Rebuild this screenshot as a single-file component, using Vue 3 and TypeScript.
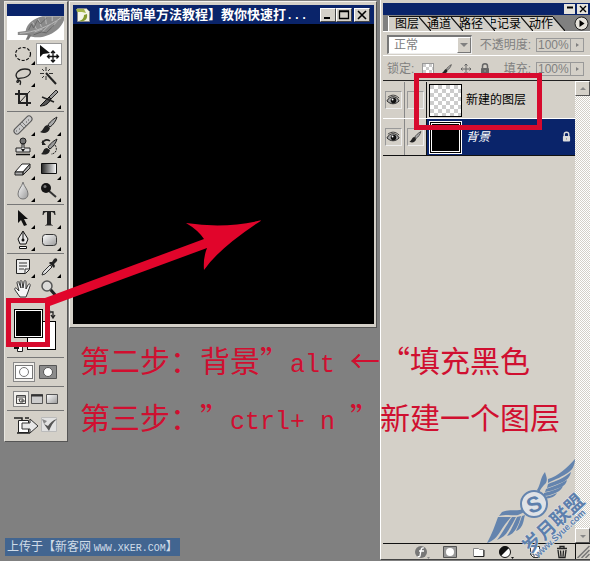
<script setup lang="ts">
import { ref } from 'vue'

interface Tool {
  icon: string
  label: string
  more?: boolean
}

const toolGroups: Tool[][] = [
  [
    { icon: 'marquee', label: '选框', more: true },
    { icon: 'move', label: '移动' },
    { icon: 'lasso', label: '套索', more: true },
    { icon: 'wand', label: '魔棒' },
    { icon: 'crop', label: '裁剪' },
    { icon: 'slice', label: '切片', more: true },
  ],
  [
    { icon: 'heal', label: '修复画笔', more: true },
    { icon: 'brush', label: '画笔', more: true },
    { icon: 'stamp', label: '图章', more: true },
    { icon: 'history', label: '历史画笔', more: true },
    { icon: 'eraser', label: '橡皮擦', more: true },
    { icon: 'gradient', label: '渐变', more: true },
    { icon: 'blur', label: '模糊', more: true },
    { icon: 'dodge', label: '减淡', more: true },
  ],
  [
    { icon: 'select', label: '路径选择', more: true },
    { icon: 'type', label: '文字', more: true },
    { icon: 'pen', label: '钢笔', more: true },
    { icon: 'shape', label: '形状', more: true },
  ],
  [
    { icon: 'notes', label: '注释', more: true },
    { icon: 'dropper', label: '吸管', more: true },
    { icon: 'hand', label: '抓手' },
    { icon: 'zoom', label: '缩放' },
  ],
]

const activeTool = ref('move')
const tabs = ['图层', '通道', '路径', '史记录', '动作']
const activeTab = ref('图层')
const opacity = ref('100%')
const fill = ref('100%')
const activeLayer = ref('背景')
const layers = [
  { name: '新建的图层', kind: 'empty', locked: false },
  { name: '背景', kind: 'black', locked: true },
]
const footer = [
  { icon: 'fx', label: '图层样式' },
  { icon: 'mask', label: '图层蒙版' },
  { icon: 'folder', label: '新建组' },
  { icon: 'adjust', label: '调整图层' },
  { icon: 'page', label: '新建图层' },
  { icon: 'trash', label: '删除图层' },
]
</script>

<template>
  <main class="desktop" lang="zh-CN">
    <svg class="sprite" aria-hidden="true">
      <defs>
        <linearGradient id="g-bw"><stop offset="0" stop-color="#222" /><stop offset="1" stop-color="#fff" /></linearGradient>
        <linearGradient id="g-soft" x1="0" y1="0" x2="1" y2="1"><stop offset="0" stop-color="#fff" /><stop offset="1" stop-color="#999" /></linearGradient>
        <symbol id="marquee" viewBox="0 0 22 22"><ellipse cx="11" cy="11" rx="7.5" ry="6.5" fill="none" stroke="#111" stroke-width="1.2" stroke-dasharray="3 1.6" /></symbol>
        <symbol id="move" viewBox="0 0 22 22"><path d="M2 2v12l3-3 7-1z" fill="#111" /><path d="M15 8v11M9.500 13.500h11M13 10l2-2 2 2M13 17l2 2 2-2M11.500 11.500l-2 2 2 2M18.500 11.500l2 2-2 2" fill="none" stroke="#111" stroke-width="1.300" /></symbol>
        <symbol id="lasso" viewBox="0 0 22 22"><path d="M6 14C1 9 7 4 13 4c7 0 7 5 1 8-4 2-9 0-8 3 2 3-2 3-1 1 1-2 5-1 3 4" fill="none" stroke="#222" stroke-width="1.300" /></symbol>
        <symbol id="wand" viewBox="0 0 22 22"><path d="M8 8l10 11" stroke="#222" stroke-width="2" /><path d="M8 2v4M8 11v4M2 8.500h4M11 8.500h4M4 4l2 2M12 4l-2 2M4 13l2-2" stroke="#333" /></symbol>
        <symbol id="crop" viewBox="0 0 22 22"><path d="M7 3v13h12M3 7h12v12" fill="none" stroke="#222" stroke-width="2" /><path d="M8 15L18 4" stroke="#222" /></symbol>
        <symbol id="slice" viewBox="0 0 22 22"><path d="M18 3l-7 7 2 2 7-7z" fill="#999" stroke="#222" /><path d="M11 10L2 19c6 0 9-3 11-7z" fill="#555" stroke="#111" /><path d="M4 10l12 5" stroke="#222" stroke-width="1.500" /></symbol>
        <symbol id="heal" viewBox="0 0 22 22"><path d="M5 17L17 5" stroke="#555" stroke-width="7" stroke-linecap="round" /><path d="M5 17L17 5" stroke="#c9c9c9" stroke-width="5" stroke-linecap="round" /><path d="M8 10l4 4M10 8l4 4" stroke="#777" /><path d="M4 17h1M7 15h1M14 8h1M16 6h1" stroke="#555" /></symbol>
        <symbol id="brush" viewBox="0 0 22 22"><path d="M19 3c-4 2-8 6-9 8l2 2c3-2 6-6 7-10z" fill="#aaa" stroke="#222" /><path d="M9.500 11C5 12 6 16 2 18c4 2 9 1 10-4z" fill="#222" /></symbol>
        <symbol id="stamp" viewBox="0 0 22 22"><circle cx="11" cy="5" r="3" fill="#777" stroke="#222" /><path d="M10 8h2v4h6v4H4v-4h6z" fill="#ddd" stroke="#222" /><path d="M4 18.500h14" stroke="#111" stroke-width="1.500" /><path d="M9 13h4l-2 3z" fill="#111" /></symbol>
        <symbol id="history" viewBox="0 0 22 22"><path d="M19 3c-4 2-8 6-9 8l2 2c3-2 6-6 7-10z" fill="#999" stroke="#222" /><path d="M9 12c-4 0-3 4-6 6 4 1 8 1 9-4zM4 4v5h4z" fill="#222" /><path d="M4 7c2-3 5-4 8-2" fill="none" stroke="#222" stroke-width="1.500" /><path d="M17 9c3 4 1 9-4 9" fill="none" stroke="#222" stroke-dasharray="2 1" /></symbol>
        <symbol id="eraser" viewBox="0 0 22 22"><path d="M3 14L10 6h8l-7 8z" fill="#fff" stroke="#222" /><path d="M3 14h8v3H3zM11 14l7-8v4l-7 7z" fill="#aaa" stroke="#222" /></symbol>
        <symbol id="gradient" viewBox="0 0 22 22"><path d="M3.500 5.500h15v10h-15z" fill="url(#g-bw)" stroke="#111" /></symbol>
        <symbol id="blur" viewBox="0 0 22 22"><path d="M11 2c1 5 5 7 5 12 0 3-2 5-5 5s-5-2-5-5c0-5 4-7 5-12z" fill="url(#g-soft)" stroke="#777" /></symbol>
        <symbol id="dodge" viewBox="0 0 22 22"><path d="M11 11l7 6" stroke="#333" stroke-width="2" /><circle cx="8" cy="8" r="5" fill="#151515" /><circle cx="7" cy="6.500" r="1.500" fill="#777" /></symbol>
        <symbol id="select" viewBox="0 0 22 22"><path d="M6 3v13l3-3 3 6 3-1-3-6h4z" fill="#111" /></symbol>
        <symbol id="type" viewBox="0 0 22 22"><path d="M5 4h12l.5 4h-1c-.5-2-1-3-3.500-3v11c0 1.500.5 2 2 2v.500H7V18c1.500 0 2-.5 2-2V5C6.500 5 6 6 5.500 8h-1z" fill="#222" /></symbol>
        <symbol id="pen" viewBox="0 0 22 22"><path d="M11 2L6 10l2 5h6l2-5z" fill="#e8e8e8" stroke="#111" /><path d="M11 3v8M7.500 17.500h7v2h-7z" fill="#fff" stroke="#111" /><circle cx="11" cy="11" r="1.500" fill="#111" /></symbol>
        <symbol id="shape" viewBox="0 0 22 22"><rect x="4.500" y="5.500" width="14" height="11" rx="3" fill="url(#g-soft)" stroke="#333" /></symbol>
        <symbol id="notes" viewBox="0 0 22 22"><path d="M4.500 3.500h13v10l-4 4h-9z" fill="#eee" stroke="#222" /><path d="M7 7h8M7 10h8M7 13h5M13 17v-4h4" fill="none" stroke="#333" /></symbol>
        <symbol id="dropper" viewBox="0 0 22 22"><path d="M4 19l1-3 7-7 2 2-7 7z" fill="#ddd" stroke="#333" /><path d="M11 7l5 5 1-2-1-2 3-3c1-2-1-4-3-2l-2 3-2 0z" fill="#222" /></symbol>
        <symbol id="hand" viewBox="0 0 22 22"><path d="M8 19L3 12c-1-2 1-3 2-1l2 2L5 5c0-2 2-2 2 0l2 5-1-6c0-2 2-2 2 0l1 6 1-6c0-2 2-2 2 0v7l2-4c1-2 3-1 2 1l-2 6-2 5z" fill="#f5f5f5" stroke="#333" /></symbol>
        <symbol id="zoom" viewBox="0 0 22 22"><path d="M12 11l7 8" stroke="#222" stroke-width="3" /><circle cx="9" cy="8" r="5" fill="#ddd" fill-opacity=".8" stroke="#555" stroke-width="1.500" /></symbol>
        <symbol id="eye" viewBox="0 0 16 16"><path d="M1 9c3-6 10-6 13 0-4 4-9 4-13 0z" fill="#aaa" stroke="#222" /><circle cx="8" cy="8.500" r="3" fill="#111" /><circle cx="7" cy="7.500" r="1" fill="#fff" /><path d="M2 5c4-3 8-3 12 1" fill="none" stroke="#333" /></symbol>
        <symbol id="lock" viewBox="0 0 10 12"><path d="M2.500 6V3c0-3 5-3 5 0v3" fill="none" stroke="currentColor" stroke-width="1.500" /><rect x="1" y="5" width="8" height="6" rx="1" fill="currentColor" /><path d="M5 7v2" stroke="#999" /></symbol>
        <symbol id="cross" viewBox="0 0 12 12"><path d="M6 1v10M1 6h10M4.500 2.500L6 1l1.500 1.500M4.500 9.500L6 11l1.500-1.500M2.500 4.500L1 6l1.500 1.500M9.500 4.500L11 6 9.500 7.500" fill="none" stroke="#666" /></symbol>
        <symbol id="fx" viewBox="0 0 16 14"><circle cx="7" cy="7" r="6" fill="#777" /><path d="M10 3c-3-1-3 2-4 8-1 1-2 1-2 0M5 6h5" fill="none" stroke="#fff" stroke-width="1.300" /><path d="M13 12h3l-1.500 2z" fill="#888" /></symbol>
        <symbol id="mask" viewBox="0 0 16 14"><path d="M1.500 1.500h13v11h-13z" fill="#999" stroke="#555" /><circle cx="8" cy="7" r="4" fill="#fff" /></symbol>
        <symbol id="folder" viewBox="0 0 16 14"><path d="M3.500 3.500h5l1 1h4v7h-10z" fill="#fff" stroke="#888" /><path d="M4 11.500h10V5" fill="none" stroke="#222" /></symbol>
        <symbol id="adjust" viewBox="0 0 16 14"><circle cx="7" cy="7" r="5.500" fill="#fff" stroke="#111" /><path d="M3 11A5.500 5.500 0 0 1 11 3z" fill="#111" /><path d="M13 12h3l-1.500 2z" fill="#111" /></symbol>
        <symbol id="page" viewBox="0 0 16 14"><path d="M4.500 1.500h9v11h-6l-3-3z" fill="#fff" stroke="#333" /><path d="M4 9h4v4" fill="none" stroke="#333" /></symbol>
        <symbol id="trash" viewBox="0 0 16 14"><path d="M3 3.500h10M6 3V1.500h4V3M4 5l1 7.500h6L12 5M6.500 5.500l.5 6M9.500 5.500l-.5 6" fill="none" stroke="#222" stroke-width="1.300" /></symbol>
      </defs>
    </svg>

    <aside class="toolbox">
      <div class="tool-title"></div>
      <div class="feather">
        <svg viewBox="0 0 58 24" aria-hidden="true">
          <path d="M11 16l8-1C20 8 27 2 36 0h22v4c-3 8-10 13-18 16-8 3-15 1-20-1l-9 0z" fill="#8a8a8a" />
          <path d="M13 17.500c14-1 30-7 42-16M26 6l4 7M32 3l3 8M39 1l1 7M46 0l0 5M28 16l8-3M36 16l7-7M45 12l6-7" fill="none" stroke="#bbb" />
          <path d="M22 18l-3 6h3l3-5z" fill="#777" />
          <path d="M22 14l3-6 2 4 4-8 3 4 6-6M27 19l8-3 5 1 8-8" fill="none" stroke="#666" />
        </svg>
      </div>
      <div v-for="(group, g) in toolGroups" :key="g" class="tool-group">
        <button
          v-for="tool in group"
          :key="tool.icon"
          type="button"
          class="tool"
          :class="{ active: activeTool === tool.icon, more: tool.more }"
          :aria-label="tool.label"
          @click="activeTool = tool.icon"
        >
          <svg><use :href="'#' + tool.icon" /></svg>
        </button>
      </div>
      <div class="colors">
        <button type="button" class="swatch back" aria-label="背景色"></button>
        <button type="button" class="swatch front" aria-label="前景色"></button>
        <svg class="swap" viewBox="0 0 8 9"><path d="M0 2h5v5M3 5l2 3 2-3M2 0L0 2l2 2" fill="none" stroke="#222" stroke-width="1.300" /></svg>
        <svg class="reset" viewBox="0 0 9 8"><path d="M3.500 2.500h5v5h-5z" fill="#fff" stroke="#222" /><path d="M0 0h5v5H0z" fill="#111" /></svg>
      </div>
      <div class="modes">
        <button type="button" class="mode pressed" aria-label="标准模式">
          <svg viewBox="0 0 20 18"><rect x="1.500" y="2.500" width="17" height="13" fill="#fff" stroke="#777" /><circle cx="10" cy="9" r="4.500" fill="#fff" stroke="#777" /></svg>
        </button>
        <button type="button" class="mode" aria-label="快速蒙版">
          <svg viewBox="0 0 20 18"><path d="M1.500 2.500h17v13h-17z" fill="#8c8c8c" stroke="#555" /><circle cx="10" cy="9" r="4.500" fill="#fff" stroke="#555" /></svg>
        </button>
      </div>
      <div class="screens">
        <button type="button" class="screen pressed" aria-label="标准屏幕">
          <svg viewBox="0 0 14 14"><path d="M2.500 3.500h9v8h-9zM2 5h10M5 7h4v3H6zM7 9h4" fill="none" stroke="#444" /></svg>
        </button>
        <button type="button" class="screen" aria-label="带菜单全屏">
          <svg viewBox="0 0 14 14"><path d="M1.500 2.500h11v9h-11z" fill="#ccc" stroke="#555" /><path d="M1 3.500h12" stroke="#333" stroke-width="2" /></svg>
        </button>
        <button type="button" class="screen" aria-label="全屏">
          <svg viewBox="0 0 14 14"><path d="M1.500 2.500h11v9h-11z" fill="url(#g-soft)" stroke="#555" /></svg>
        </button>
      </div>
      <button type="button" class="jump" aria-label="跳转">
        <svg viewBox="0 0 46 20">
          <path d="M5.500 5.500h10v12h-10z" fill="#fff" stroke="#222" /><path d="M1 3h8v2M12 3h4M4 18h13" fill="none" stroke="#222" stroke-width="1.500" />
          <path d="M9 8h8V4l8 7-8 7v-4H9z" fill="#e8e8e8" stroke="#333" />
          <path d="M28.500 2.500h15v14h-15z" fill="#e2e2e2" stroke="#bbb" /><path d="M31 9l5 7c2-5 4-9 8-12-4 1-7 4-9 7z" fill="#555" /><path d="M29 4l5 2-3 3z" fill="#888" />
        </svg>
      </button>
    </aside>

    <section class="document">
      <header class="doc-title">
        <svg class="doc-icon" viewBox="0 0 16 16"><path d="M2.500 1.500h9l3 3v10h-12z" fill="#f4f4e8" stroke="#888" /><path d="M1 2h8l2 4-4-1-5 0z" fill="#a5b64c" /><path d="M12 7c1 6-3 8-8 7 4-1 5-4 5-6z" fill="#849a2d" /></svg>
        <h1>【极酷简单方法教程】教你快速打<span>...</span></h1>
        <div class="win-buttons">
          <button type="button" aria-label="最小化"><svg viewBox="0 0 12 10"><path d="M2 8h6" stroke="#000" stroke-width="2" /></svg></button>
          <button type="button" aria-label="最大化"><svg viewBox="0 0 12 10"><path d="M1.500 1.500h9v7h-9zM1 1h10" fill="none" stroke="#000" stroke-width="1.300" /></svg></button>
          <button type="button" class="close" aria-label="关闭"><svg viewBox="0 0 12 10"><path d="M2 1l8 8M10 1L2 9" stroke="#000" stroke-width="1.600" /></svg></button>
        </div>
      </header>
      <div class="canvas"></div>
    </section>

    <aside class="panel">
      <header class="panel-title">
        <button type="button" aria-label="折叠"><svg viewBox="0 0 8 8"><path d="M1 2.500h6" stroke="#000" stroke-width="2" /></svg></button>
        <button type="button" aria-label="关闭面板"><svg viewBox="0 0 8 8"><path d="M1 1l6 6M7 1L1 7" stroke="#000" stroke-width="1.400" /></svg></button>
      </header>
      <nav class="tabs">
        <div class="tab-list">
          <button v-for="tab in tabs" :key="tab" type="button" class="tab" @click="activeTab = tab">
            <span>{{ tab }}</span>
            <svg viewBox="0 0 12 14"><path d="M0 0l12 14H0z" fill="#d4d0c8" /><path d="M0 0l12 14" stroke="#111" stroke-width="1.200" /></svg>
          </button>
        </div>
        <button type="button" class="menu" aria-label="面板菜单"><svg viewBox="0 0 15 15"><circle cx="7.500" cy="7.500" r="6.500" fill="#e6e3dc" stroke="#222" /><path d="M5.500 4v7l5-3.500z" fill="#000" /></svg></button>
      </nav>
      <div class="options">
        <span class="combo">
          <select disabled aria-label="混合模式"><option>正常</option></select>
          <i></i>
        </span>
        <label for="opacity">不透明度:</label>
        <span class="spin"><input id="opacity" v-model="opacity" type="text" disabled /><i></i></span>
      </div>
      <div class="options locks">
        <span class="lock-label">锁定:</span>
        <span class="lock-icons">
          <i class="checker"></i>
          <svg><use href="#brush" /></svg>
          <svg><use href="#cross" /></svg>
          <svg><use href="#lock" /></svg>
        </span>
        <label for="fill">填充:</label>
        <span class="spin"><input id="fill" v-model="fill" type="text" disabled /><i></i></span>
      </div>
      <div class="layer-area">
        <ul class="layers">
          <li v-for="layer in layers" :key="layer.name" :class="{ selected: activeLayer === layer.name }" @click="activeLayer = layer.name">
            <span class="cell"><span class="well"><svg><use href="#eye" /></svg></span></span>
            <span class="cell"><span class="well"><svg v-if="activeLayer === layer.name"><use href="#brush" /></svg></span></span>
            <span class="layer-body">
              <span class="thumb" :class="layer.kind"></span>
              <span class="layer-name">{{ layer.name }}</span>
              <svg v-if="layer.locked" class="layer-lock"><use href="#lock" /></svg>
            </span>
          </li>
        </ul>
        <div class="scroll">
          <button type="button" aria-label="向上滚动"><svg viewBox="0 0 10 10"><path d="M2 6h6L5 3z" fill="#888" /></svg></button>
          <button type="button" aria-label="向下滚动"><svg viewBox="0 0 10 10"><path d="M2 4h6L5 7z" fill="#888" /></svg></button>
        </div>
      </div>
      <footer class="panel-footer">
        <div class="footer-tools">
          <button v-for="item in footer" :key="item.icon" type="button" :aria-label="item.label"><svg><use :href="'#' + item.icon" /></svg></button>
        </div>
        <svg class="grip" viewBox="0 0 13 14"><path d="M1 14L13 2M5 14l8-8M9 14l4-4" stroke="#777" stroke-width="1.500" /></svg>
      </footer>
    </aside>

    <div class="steps">
      <p>第二步：背景”<span>alt </span>←“填充黑色</p>
      <p>第三步：”<span>ctrl+ n </span>”新建一个图层</p>
    </div>
    <div class="mark mark-color"></div>
    <div class="mark mark-layer"></div>
    <svg class="arrow" viewBox="0 0 220 90" aria-hidden="true">
      <path d="M4 81L163 22Q157 13 145 6Q185 12 221 3Q178 31 163 53Q162 41 166 31L6 90z" fill="#e1052b" />
    </svg>

    <p class="source">上传于【新客网 <span>WWW.XKER.COM</span>】</p>
    <svg class="brand" viewBox="0 0 106 106">
      <g fill="#6484ae">
        <path d="M57 35C61 29 60 23 65 17C66 21 68 24 66 28C63 31 60 34 59 38z" />
        <path d="M68 24C78 21 87 13 95 4C95 9 93 14 89 17C82 22 76 24 68 28z" />
        <path d="M68 29C76 26 84 23 91 17C90 22 87 25 83 27C78 29 73 31 67 33z" />
        <path d="M66 34C74 31 80 29 87 25C86 30 82 32 79 33C74 35 70 36 65 37z" />
        <path d="M64 38C71 36 76 35 83 31C81 36 76 38 73 39C70 40 67 41 64 41z" />
        <path d="M64 42C69 41 73 40 77 38C75 42 70 43 65 44z" />
        <path d="M46 52C38 58 32 53 22 57L19 61C27 59 34 61 38 60C42 58 45 57 47 54z" />
        <path d="M18 62C15 70 12 79 7 88C13 86 17 82 20 77C24 70 28 66 31 62z" />
        <path d="M32 62C27 69 25 74 17 85C22 83 26 80 28 76C31 71 34 66 36 62z" />
        <path d="M37 62C34 68 32 74 27 81C32 80 35 76 37 72C39 68 40 65 41 61z" />
        <path d="M42 61C40 67 38 72 36 76C40 75 42 71 43 68C44 65 44 63 45 60z" />
      </g>
      <circle cx="54" cy="49" r="13" fill="#dfe2e6" stroke="#6484ae" stroke-width="2" />
      <text class="brand-s" x="54" y="57" text-anchor="middle" transform="rotate(-20 54 49)">S</text>
      <text class="brand-name" transform="translate(50 99) rotate(-43)">岁月联盟</text>
      <text class="brand-url" transform="translate(58 103) rotate(-43)">www.Syue.com</text>
    </svg>
  </main>
</template>

<style>
body {
  background: #808080;
}
</style>

<style scoped>
* {
  box-sizing: border-box;
}
.desktop {
  position: relative;
  display: flex;
  align-items: flex-start;
  min-height: 100vh;
  padding-left: 4px;
  overflow: hidden;
  background: #808080;
  color: #000;
  font: 12px/16px "Liberation Sans", "Noto Sans CJK SC", sans-serif;
}
.sprite {
  position: absolute;
  width: 0;
  height: 0;
}
button {
  margin: 0;
  padding: 0;
  border: 0;
  background: none;
  color: inherit;
  font: inherit;
  white-space: nowrap;
}
svg {
  display: block;
  flex: none;
}

/* toolbox */
.toolbox {
  flex: none;
  width: 64px;
  margin-top: 1px;
  padding: 2px 3px 2px 2px;
  border: 1px solid #e8e6e0;
  border-right-color: #555;
  border-bottom-color: #555;
  background: #d4d0c8;
}
.tool-title {
  height: 12px;
  background: #0a246a;
}
.feather {
  height: 24px;
  margin-bottom: 3px;
  background: #fff;
}
.feather svg {
  width: 100%;
  height: 24px;
}
.tool-group {
  display: grid;
  grid-template-columns: 26px 26px;
  justify-content: center;
  padding-bottom: 2px;
  margin-bottom: 2px;
  border-bottom: 1px solid #777;
}
.tool-group:nth-of-type(6) {
  margin-bottom: 0;
  border: 0;
}
.tool {
  position: relative;
  display: grid;
  place-items: center;
  height: 22px;
}
.tool svg {
  width: 22px;
  height: 22px;
}
.tool.active {
  background: #fff;
  box-shadow: inset 0 0 0 1px #999;
}
.tool.more::after {
  content: "";
  position: absolute;
  right: 1px;
  bottom: 0;
  border: 2px solid #000;
  border-top-color: transparent;
  border-left-color: transparent;
}
.colors {
  position: relative;
  height: 56px;
  border-bottom: 1px solid #777;
}
.swatch {
  position: absolute;
  width: 29px;
  height: 29px;
  border: 1px solid #000;
}
.front {
  left: 7px;
  top: 7px;
  background: #000;
  box-shadow: inset 0 0 0 1px #fff;
}
.back {
  left: 20px;
  top: 19px;
  background: #fff;
}
.swap {
  position: absolute;
  left: 41px;
  top: 8px;
  width: 8px;
  height: 9px;
}
.reset {
  position: absolute;
  left: 7px;
  top: 42px;
  width: 9px;
  height: 8px;
}
.modes,
.screens {
  display: flex;
  align-items: center;
  justify-content: center;
  border-bottom: 1px solid #777;
}
.modes {
  gap: 3px;
  height: 29px;
}
.screens {
  gap: 1px;
  height: 24px;
}
.mode svg {
  width: 20px;
  height: 18px;
}
.screen svg {
  width: 14px;
  height: 14px;
}
.pressed {
  border: 1px solid #888;
  background: #f2f0ec;
}
.jump {
  display: block;
  margin: 4px auto;
}
.jump svg {
  width: 46px;
  height: 20px;
}

/* document window */
.document {
  flex: 1;
  min-width: 0;
  margin-top: 1px;
  margin-left: 1px;
  padding: 3px 2px 3px 3px;
  border: 1px solid #f4f2ee;
  border-right-color: #555;
  border-bottom-color: #555;
  background: #d4d0c8;
}
.doc-title {
  display: flex;
  align-items: center;
  height: 19px;
  padding: 0 4px 0 2px;
  background: #0a246a;
  color: #fff;
}
.doc-icon {
  width: 16px;
  height: 16px;
}
h1 {
  flex: 1;
  min-width: 0;
  margin: 0;
  overflow: hidden;
  font: bold 13px/18px "Noto Sans CJK SC", sans-serif;
  white-space: nowrap;
}
h1 span {
  font-family: "Liberation Mono", monospace;
  font-size: 12px;
}
.win-buttons {
  display: flex;
}
.win-buttons button {
  display: grid;
  place-items: center;
  width: 16px;
  height: 14px;
  border: 1px solid #fff;
  border-right-color: #444;
  border-bottom-color: #444;
  background: #d4d0c8;
}
.win-buttons .close {
  margin-left: 2px;
}
.win-buttons svg {
  width: 12px;
  height: 10px;
}
.canvas {
  height: 300px;
  background: #000;
}

/* layers panel */
.panel {
  display: flex;
  flex: none;
  flex-direction: column;
  align-self: stretch;
  width: 210px;
  margin-left: 3px;
  margin-bottom: 1px;
  padding: 3px 0 0 2px;
  border-left: 1px solid #fff;
  border-bottom: 1px solid #444;
  background: #d4d0c8;
}
.panel-title {
  display: flex;
  align-items: center;
  justify-content: flex-end;
  gap: 2px;
  height: 12px;
  padding-right: 2px;
  background: #0a246a;
}
.panel-title button {
  display: grid;
  place-items: center;
  width: 11px;
  height: 10px;
  background: #e6e3dc;
}
.panel-title svg {
  width: 8px;
  height: 8px;
}
.tabs {
  display: flex;
  align-items: flex-end;
  justify-content: space-between;
  height: 17px;
  padding-right: 1px;
  border-bottom: 1px solid #fff;
  background: #808080;
}
.tab-list {
  display: flex;
  height: 15px;
  margin-left: 5px;
  padding-left: 6px;
  border-left: 1px solid #fff;
  background: linear-gradient(#111, #111) 0 0 / calc(100% - 12px) 1px no-repeat, linear-gradient(#d4d0c8, #d4d0c8) 0 0 / calc(100% - 12px) 100% no-repeat;
}
.tab {
  display: flex;
  align-items: flex-end;
}
.tab span {
  display: flex;
  justify-content: flex-end;
  max-width: 30px;
  overflow: hidden;
  line-height: 14px;
}
.tab svg {
  position: relative;
  z-index: 1;
  width: 12px;
  height: 14px;
}
.tab + .tab {
  margin-left: -4px;
}
.menu svg {
  width: 15px;
  height: 15px;
}
.options {
  display: flex;
  align-items: center;
  height: 24px;
  padding: 2px 6px 0 4px;
  border-bottom: 1px solid #fff;
  color: #808080;
  white-space: nowrap;
}
.options label {
  margin-left: auto;
  margin-right: 5px;
}
.combo {
  display: flex;
  width: 85px;
  height: 19px;
  border: 2px solid #777;
  border-right: 1px solid #eee;
  border-bottom: 1px solid #eee;
  background: #fff;
}
.combo select {
  flex: 1;
  min-width: 0;
  padding: 0 0 0 5px;
  border: 0;
  appearance: none;
  background: #fff;
  color: #808080;
  font: inherit;
  opacity: 1;
}
.combo i,
.spin i {
  display: grid;
  place-items: center;
  width: 14px;
  background: #d4d0c8;
}
.combo i {
  border: 1px solid #fff;
  border-right-color: #777;
  border-bottom-color: #777;
}
.combo i::after {
  content: "";
  border: 4px solid transparent;
  border-top-color: #808080;
  border-bottom: 0;
}
.spin {
  display: flex;
  width: 48px;
  height: 14px;
  border: 1px solid #999;
}
.spin input {
  flex: 1;
  min-width: 0;
  padding: 0 1px;
  border: 0;
  background: transparent;
  color: #808080;
  font: inherit;
  line-height: 12px;
}
.spin i {
  width: 13px;
  border-left: 1px solid #999;
}
.spin i::after {
  content: "";
  border: 2px solid transparent;
  border-left: 3px solid #808080;
  border-right: 0;
}
.locks {
  border-bottom: 0;
}
.lock-icons {
  display: flex;
  gap: 7px;
  margin-left: 8px;
  color: #666;
}
.lock-icons svg {
  width: 12px;
  height: 12px;
}
.checker {
  width: 12px;
  height: 12px;
  border: 1px solid #999;
  background: repeating-conic-gradient(#fff 0 25%, #ccc 0 50%) 0 0 / 6px 6px;
}
.layer-area {
  display: flex;
  flex: 1;
  border-top: 1px solid #222;
  border-bottom: 1px solid #111;
}
.layers {
  flex: 1;
  min-width: 0;
  margin: 0;
  padding: 1px 0 0;
  list-style: none;
}
.layers li {
  display: flex;
  height: 37px;
  border-bottom: 1px solid #fff;
}
.layers li.selected {
  border-bottom-color: #111;
}
.cell {
  display: grid;
  place-items: center;
  width: 22px;
  border-right: 1px solid #888;
}
.cell + .cell {
  border-right-color: #111;
}
.well {
  display: grid;
  place-items: center;
  width: 17px;
  height: 18px;
  border: 1px solid #999;
  border-right-color: #eee;
  border-bottom-color: #eee;
}
.well svg {
  width: 15px;
  height: 16px;
}
.layer-body {
  display: flex;
  flex: 1;
  align-items: center;
  gap: 4px;
  min-width: 0;
  padding: 0 4px 0 2px;
}
.selected .layer-body {
  background: #0a246a;
  color: #fff;
  font-style: italic;
}
.thumb {
  width: 33px;
  height: 33px;
  border: 1px solid #000;
}
.thumb.empty {
  background: repeating-conic-gradient(#fff 0 25%, #ccc 0 50%) 0 0 / 8px 8px;
}
.thumb.black {
  background: #000;
  border-color: #fff;
  box-shadow: inset 0 0 0 1px #000, inset 0 0 0 2px #fff;
}
.layer-lock {
  width: 9px;
  height: 12px;
  margin-left: auto;
  color: #ddd;
}
.scroll {
  display: flex;
  flex-direction: column;
  justify-content: space-between;
  width: 15px;
  background: repeating-conic-gradient(#fff 0 25%, #d4d0c8 0 50%) 0 0 / 2px 2px;
}
.scroll button {
  display: grid;
  place-items: center;
  height: 15px;
  border: 1px solid #fff;
  border-right-color: #555;
  border-bottom-color: #555;
  background: #d4d0c8;
}
.scroll svg {
  width: 10px;
  height: 10px;
}
.panel-footer {
  display: flex;
  height: 15px;
}
.footer-tools {
  display: flex;
  flex: 1;
  align-items: center;
  justify-content: flex-end;
  gap: 12px;
  padding-right: 5px;
  border-right: 1px solid #111;
}
.footer-tools svg {
  width: 16px;
  height: 14px;
}
.grip {
  width: 14px;
  height: 14px;
}

/* notes drawn over the windows */
.steps {
  position: absolute;
  left: 80px;
  top: 331px;
  color: #d00f30;
  font: 30px/57px "Noto Sans CJK SC", sans-serif;
  text-spacing-trim: space-all;
  white-space: pre;
}
.steps p {
  height: 57px;
  margin: 0;
}
.steps span {
  font-family: "Liberation Mono", monospace;
  font-size: 25px;
}
.mark {
  position: absolute;
  border: 5px solid #d70a2d;
}
.mark-color {
  left: 6px;
  top: 298px;
  width: 44px;
  height: 49px;
}
.mark-layer {
  left: 414px;
  top: 73px;
  width: 128px;
  height: 57px;
}
.arrow {
  position: absolute;
  left: 41px;
  top: 217px;
  width: 220px;
  height: 90px;
}
.source {
  position: absolute;
  left: 5px;
  bottom: 5px;
  margin: 0;
  padding: 0 2px;
  background: #426590;
  color: #d0dce8;
  line-height: 15px;
  white-space: nowrap;
  font-family: "Noto Sans CJK SC", sans-serif;
}
.source span {
  font-family: "Liberation Mono", monospace;
  font-size: 10px;
}
.brand {
  position: absolute;
  right: 4px;
  bottom: 0;
  width: 106px;
  height: 106px;
  overflow: visible;
}
.brand text {
  fill: #5d7fac;
  stroke: #dfe2e6;
  stroke-width: 1px;
  paint-order: stroke;
}
.brand .brand-s {
  font: bold 22px "Liberation Sans", sans-serif;
}
.brand .brand-name {
  font: bold 19px "Noto Sans CJK SC", sans-serif;
}
.brand .brand-url {
  font: bold 9px "Liberation Sans", sans-serif;
}
</style>
